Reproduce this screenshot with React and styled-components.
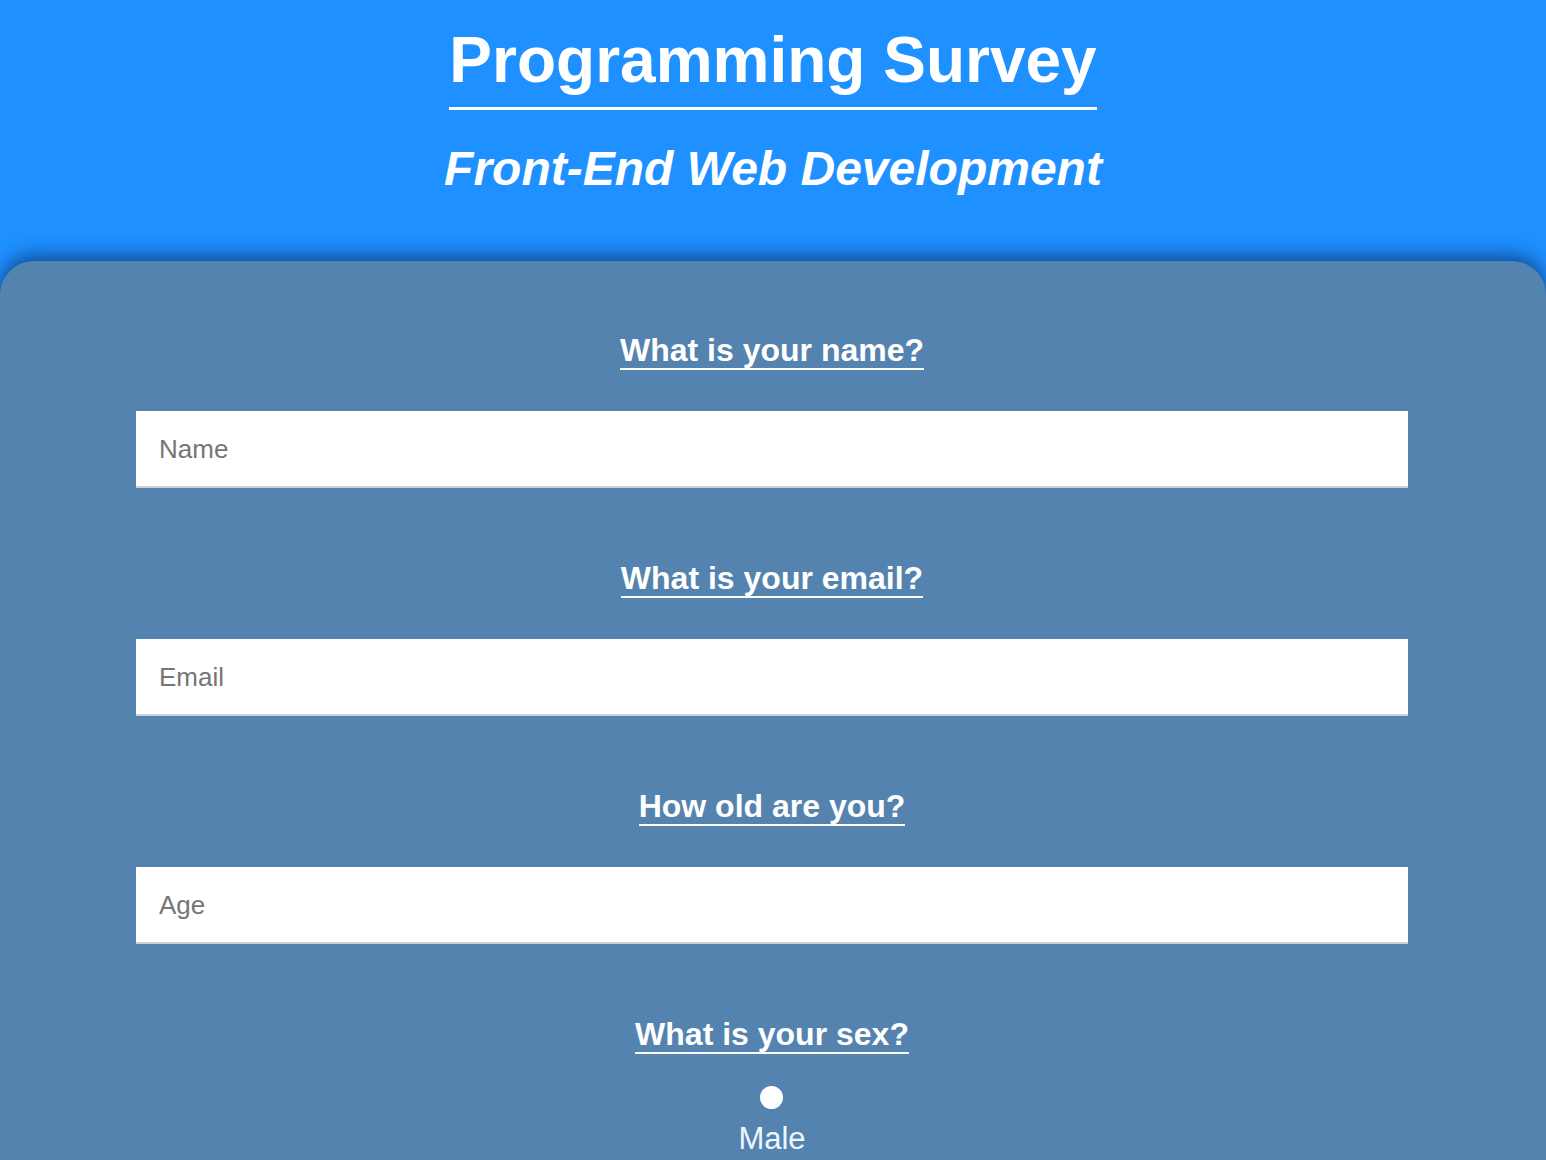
import React from 'react';
import styled, { createGlobalStyle } from 'styled-components';

const GlobalStyle = createGlobalStyle`
  html, body {
    margin: 0;
    padding: 0;
    background: #1e90ff;
    font-family: "Liberation Sans", Arial, sans-serif;
  }
  * {
    box-sizing: border-box;
  }
`;

const Header = styled.header`
  display: flex;
  flex-direction: column;
  align-items: center;
  padding-top: 23px;
  padding-bottom: 65px;
  color: #fff;
`;

const Title = styled.h1`
  margin: 0;
  font-size: 64px;
  line-height: 74px;
  font-weight: 700;
  padding-bottom: 10px;
  border-bottom: 3px solid #fff;
`;

const Subtitle = styled.h2`
  margin: 31px 0 0;
  font-size: 48px;
  line-height: 55px;
  font-weight: 700;
  font-style: italic;
`;

const Form = styled.form`
  background: #5583af;
  border-radius: 34px 34px 0 0;
  box-shadow: 0 -6px 18px rgba(0, 25, 70, 0.55);
  padding: 73px 138px 40px 136px;
  display: flex;
  flex-direction: column;
  gap: 74px;
`;

const Group = styled.div`
  display: flex;
  flex-direction: column;
  align-items: center;
`;

const Label = styled.label`
  margin: 0 0 41px;
  color: #fff;
  font-size: 32px;
  line-height: 32px;
  font-weight: 700;
  padding-bottom: 2px;
  border-bottom: 2px solid #fff;
`;

const Input = styled.input`
  width: 100%;
  height: 77px;
  border: none;
  border-bottom: 2px solid #cfd3d8;
  background: #fff;
  padding: 1px 23px 0;
  font-family: "Liberation Sans", Arial, sans-serif;
  font-size: 26px;
  color: #333;
  outline: none;

  &::placeholder {
    color: #767676;
  }
`;

const Options = styled.div`
  display: flex;
  flex-direction: column;
  align-items: center;
  margin-top: -9px;
`;

const Option = styled.label`
  display: flex;
  flex-direction: column;
  align-items: center;
  gap: 13px;
  color: #eef6ff;
  font-size: 31px;
  line-height: 34px;
`;

const Radio = styled.input`
  appearance: none;
  margin: 0;
  width: 23px;
  height: 23px;
  border-radius: 50%;
  background: #fff;
  border: none;
`;

const questions = [
  { id: 'name', label: 'What is your name?', placeholder: 'Name', type: 'text' },
  { id: 'email', label: 'What is your email?', placeholder: 'Email', type: 'email' },
  { id: 'age', label: 'How old are you?', placeholder: 'Age', type: 'number' },
];

const App = () => (
  <>
    <GlobalStyle />
    <Header>
      <Title>Programming Survey</Title>
      <Subtitle>Front-End Web Development</Subtitle>
    </Header>
    <Form onSubmit={(e) => e.preventDefault()}>
      {questions.map((q) => (
        <Group key={q.id}>
          <Label htmlFor={q.id}>{q.label}</Label>
          <Input id={q.id} type={q.type} placeholder={q.placeholder} />
        </Group>
      ))}
      <Group>
        <Label as="p">What is your sex?</Label>
        <Options>
          <Option>
            <Radio type="radio" name="sex" value="male" />
            Male
          </Option>
        </Options>
      </Group>
    </Form>
  </>
);

export default App;
